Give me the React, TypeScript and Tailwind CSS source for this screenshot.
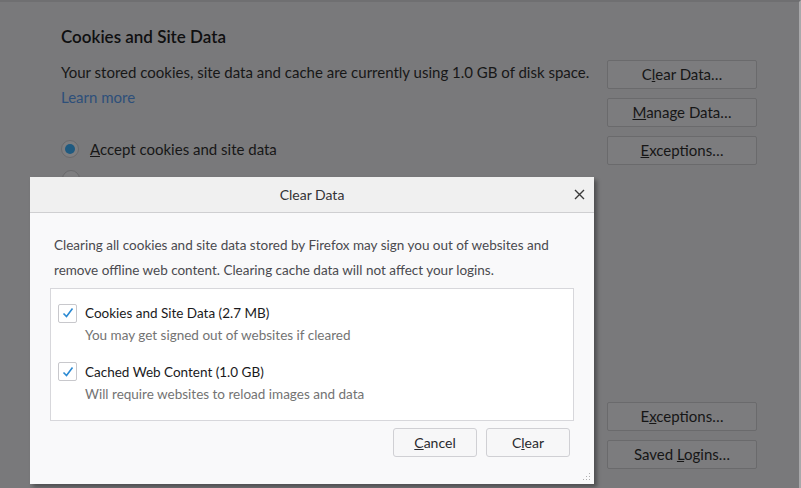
import React from 'react';

const font = { fontFamily: 'Lato, "Noto Sans", sans-serif' };

function BgButton({ children }: { children: React.ReactNode }) {
  return (
    <div className="h-[29px] w-[150px] border border-[#6a6a6c] bg-[#7c7c7e] rounded-[2px] flex items-center justify-center text-[15px] text-[#161616]">
      <span>{children}</span>
    </div>
  );
}

function Check() {
  return (
    <div className="w-[19px] h-[19px] border border-[#c8c8cc] bg-white rounded-[2px] flex items-center justify-center shrink-0">
      <svg width="14" height="14" viewBox="0 0 14 14">
        <path d="M2.5 7.5 L5.5 10.5 L11.5 2.5" fill="none" stroke="#2b8ad3" strokeWidth="1.6" />
      </svg>
    </div>
  );
}

function DialogButton({ children }: { children: React.ReactNode }) {
  return (
    <div className="h-[29px] w-[84px] border border-[#d0d0d4] bg-[#f7f7f8] rounded-[3px] flex items-center justify-center text-[14px] text-[#2a2a2e]">
      <span>{children}</span>
    </div>
  );
}

export default function App() {
  return (
    <div className="relative w-[801px] h-[488px] overflow-hidden bg-[#79797b] border-t-2 border-t-[#6f6f71] border-r-2 border-r-[#a8a8aa]" style={font}>
      {/* Background settings page (dimmed) */}
      <div className="flex pl-[61px] pt-[24px]">
        <div className="flex-1">
          <h2 className="text-[17px] font-semibold text-[#0f0f10] leading-[22px]">Cookies and Site Data</h2>
          <p className="mt-[14px] text-[15px] text-[#171717] leading-[20px]">
            Your stored cookies, site data and cache are currently using 1.0 GB of disk space.
          </p>
          <p className="mt-[5px] text-[15px] text-[#2d4f7a] leading-[20px]">Learn more</p>
          <div className="mt-[31px] flex items-center gap-[11px]">
            <div className="w-[18px] h-[18px] rounded-full border border-[#6a6a6c] bg-[#7e7e80] flex items-center justify-center">
              <div className="w-[10px] h-[10px] rounded-full bg-[#1f5a80]" />
            </div>
            <span className="text-[15px] text-[#171717]">
              <span className="underline">A</span>ccept cookies and site data
            </span>
          </div>
          <div className="mt-[9px] ml-[1px] w-[18px] h-[18px] rounded-full border border-[#6a6a6c] bg-[#7e7e80]" />
        </div>
        <div className="w-[150px] mr-[42px] pt-[34px] flex flex-col gap-[9px]">
          <BgButton>C<span className="underline">l</span>ear Data…</BgButton>
          <BgButton><span className="underline">M</span>anage Data…</BgButton>
          <BgButton><span className="underline">E</span>xceptions…</BgButton>
          <div className="h-[219px]" />
          <BgButton>E<span className="underline">x</span>ceptions…</BgButton>
          <BgButton>Saved <span className="underline">L</span>ogins…</BgButton>
        </div>
      </div>

      {/* Clear Data dialog */}
      <div className="absolute left-[30px] top-[175px] w-[564px] h-[307px] bg-[#f9f9fa] shadow-[3px_3px_4px_rgba(0,0,0,0.35)] flex flex-col">
        <div className="relative h-[36px] bg-[#f0f0f0] border-b border-[#cfcfd1] flex items-center justify-center">
          <span className="text-[14px] text-[#333336]">Clear Data</span>
          <svg className="absolute right-[9px] top-[12px]" width="11" height="11" viewBox="0 0 11 11">
            <path d="M1 1 L10 10 M10 1 L1 10" stroke="#3a3a3a" strokeWidth="1.4" />
          </svg>
        </div>
        <div className="px-[24px] pt-[20px] text-[13.5px] leading-[25px] text-[#4a4a4f]">
          <p>Clearing all cookies and site data stored by Firefox may sign you out of websites and</p>
          <p>remove offline web content. Clearing cache data will not affect your logins.</p>
        </div>
        <div className="mx-[20px] mt-[5px] h-[133px] bg-white border border-[#d7d7db] px-[7px] pt-[14px]">
          <div className="flex items-center gap-[8px]">
            <Check />
            <span className="text-[13.5px] text-[#1a1a1c]">Cookies and Site Data (2.7 MB)</span>
          </div>
          <p className="ml-[27px] mt-[2px] text-[13.5px] text-[#737373]">You may get signed out of websites if cleared</p>
          <div className="mt-[16px] flex items-center gap-[8px]">
            <Check />
            <span className="text-[13.5px] text-[#1a1a1c]">Cached Web Content (1.0 GB)</span>
          </div>
          <p className="ml-[27px] mt-[2px] text-[13.5px] text-[#737373]">Will require websites to reload images and data</p>
        </div>
        <div className="mt-[7px] mr-[24px] flex justify-end gap-[9px]">
          <DialogButton><span className="underline">C</span>ancel</DialogButton>
          <DialogButton>C<span className="underline">l</span>ear</DialogButton>
        </div>
        <svg className="absolute right-[3px] bottom-[3px]" width="8" height="8" viewBox="0 0 8 8">
          <rect x="6" y="0" width="1" height="1" fill="#b0b0b0" />
          <rect x="3" y="3" width="1" height="1" fill="#b0b0b0" />
          <rect x="6" y="3" width="1" height="1" fill="#b0b0b0" />
          <rect x="0" y="6" width="1" height="1" fill="#b0b0b0" />
          <rect x="3" y="6" width="1" height="1" fill="#b0b0b0" />
          <rect x="6" y="6" width="1" height="1" fill="#b0b0b0" />
        </svg>
      </div>
    </div>
  );
}
